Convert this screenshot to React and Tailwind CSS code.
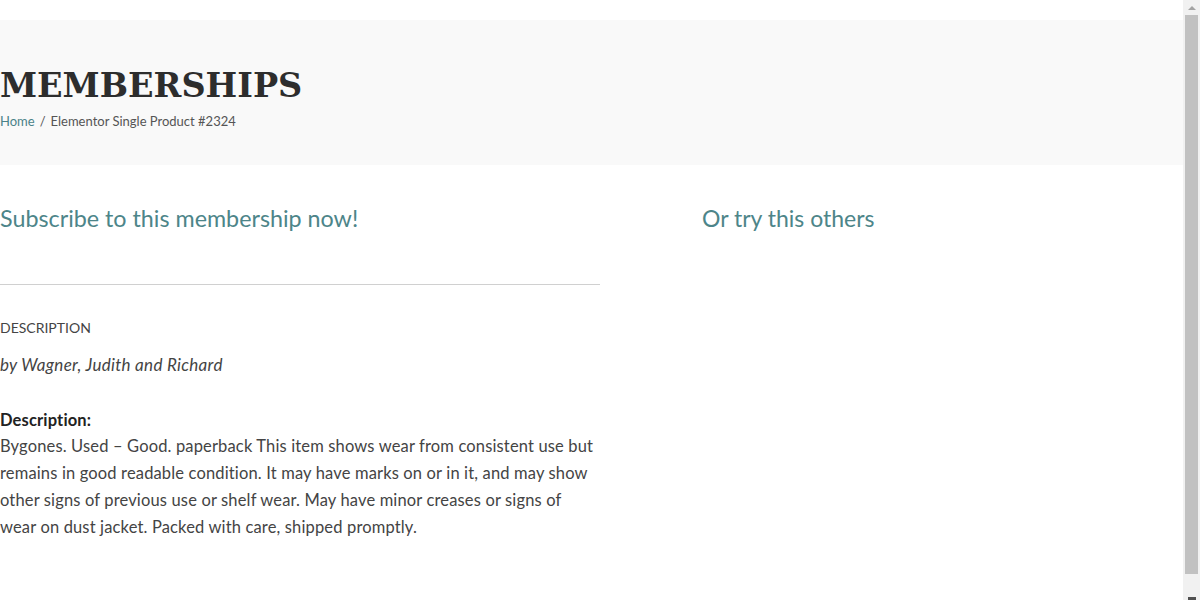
import React from 'react';

function PageHeader() {
  return (
    <div className="mt-5 bg-[#f9f9f9] h-[145px] pt-[44px]">
      <h1 className="font-['DejaVu_Serif',serif] font-bold text-[33.5px] leading-[44px] text-[#2d2d2d]">
        MEMBERSHIPS
      </h1>
      <div className="mt-[4px] text-[13px] leading-[18px] text-[#555]">
        <a href="#" className="text-[#4a8288]">Home</a>
        <span className="mx-[5px]">/</span>
        <span>Elementor Single Product #2324</span>
      </div>
    </div>
  );
}

function Scrollbar() {
  return (
    <div className="w-[17px] h-[600px] shrink-0 bg-[#f1f1f1] flex flex-col items-center">
      <div className="h-[15px] flex items-center justify-center">
        <div className="w-0 h-0 border-x-[4px] border-x-transparent border-b-[4px] border-b-[#a3a3a3]" />
      </div>
      <div className="w-[13px] h-[559px] bg-[#c1c1c1]" />
      <div className="flex-1 flex items-end justify-center">
        <div className="w-[8px] h-[3px] bg-[#505050]" />
      </div>
    </div>
  );
}

function App() {
  return (
    <div className="flex h-[600px] overflow-hidden bg-white font-['Lato',sans-serif] text-[#444]">
      <div className="flex-1">
        <PageHeader />
        <div className="flex pt-[38px]">
          <div className="w-[600px]">
            <h2 className="text-[23.3px] leading-[30px] text-[#4d8589]">Subscribe to this membership now!</h2>
            <div className="mt-[51px] border-t border-[#d0d0d0]" />
            <div className="mt-[34px] text-[14px] leading-[18px] uppercase text-[#444]">Description</div>
            <p className="mt-[16px] italic text-[17px] leading-[24px] tracking-[0.3px] text-[#444]">
              by Wagner, Judith and Richard
            </p>
            <div className="mt-[30px] text-[16.5px] leading-[27px] tracking-[0.15px]">
              <p className="font-bold text-[#222]">Description:</p>
              <p className="-mt-[1px]">
                Bygones. Used – Good. paperback This item shows wear from consistent use but remains in good readable
                condition. It may have marks on or in it, and may show other signs of previous use or shelf wear. May
                have minor creases or signs of wear on dust jacket. Packed with care, shipped promptly.
              </p>
            </div>
          </div>
          <div className="ml-[102px] flex-1">
            <h2 className="text-[23px] leading-[30px] text-[#4d8589]">Or try this others</h2>
          </div>
        </div>
      </div>
      <Scrollbar />
    </div>
  );
}

export default App;
